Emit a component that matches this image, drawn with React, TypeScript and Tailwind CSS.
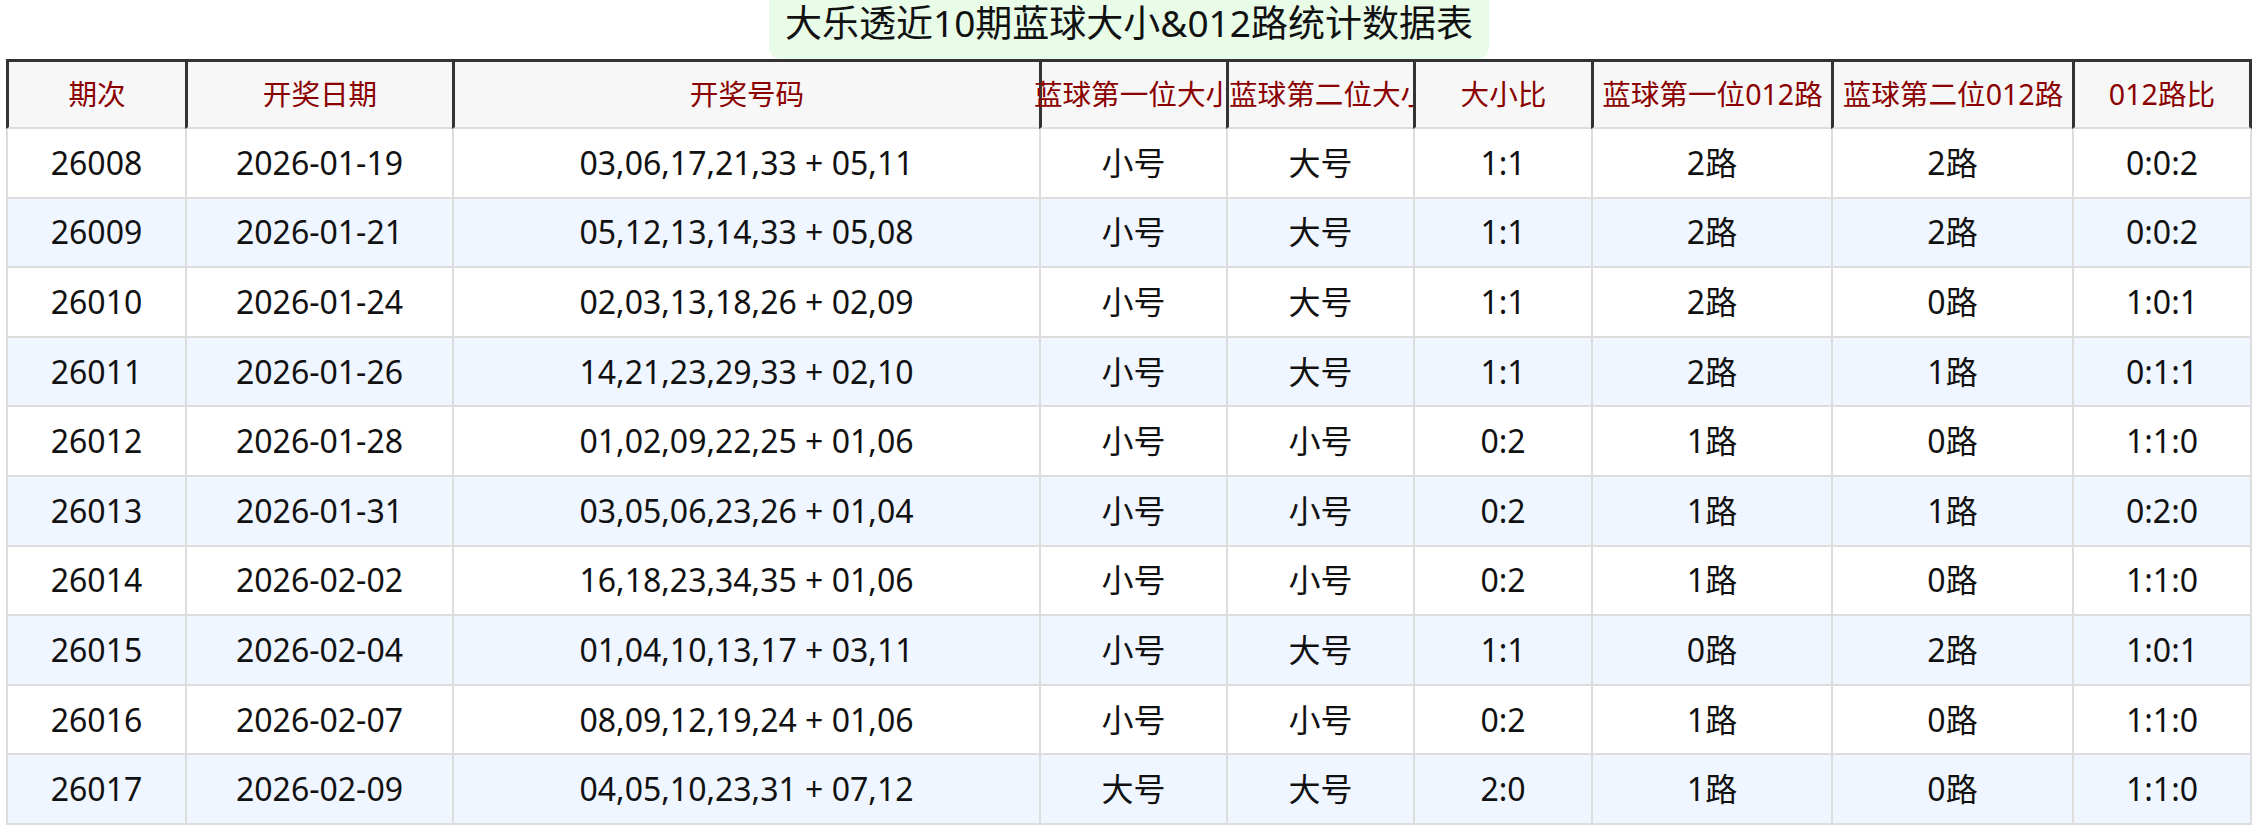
import React from "react";

const rows: string[][] = [
  ["26008", "2026-01-19", "03,06,17,21,33 + 05,11", "小号", "大号", "1:1", "2路", "2路", "0:0:2"],
  ["26009", "2026-01-21", "05,12,13,14,33 + 05,08", "小号", "大号", "1:1", "2路", "2路", "0:0:2"],
  ["26010", "2026-01-24", "02,03,13,18,26 + 02,09", "小号", "大号", "1:1", "2路", "0路", "1:0:1"],
  ["26011", "2026-01-26", "14,21,23,29,33 + 02,10", "小号", "大号", "1:1", "2路", "1路", "0:1:1"],
  ["26012", "2026-01-28", "01,02,09,22,25 + 01,06", "小号", "小号", "0:2", "1路", "0路", "1:1:0"],
  ["26013", "2026-01-31", "03,05,06,23,26 + 01,04", "小号", "小号", "0:2", "1路", "1路", "0:2:0"],
  ["26014", "2026-02-02", "16,18,23,34,35 + 01,06", "小号", "小号", "0:2", "1路", "0路", "1:1:0"],
  ["26015", "2026-02-04", "01,04,10,13,17 + 03,11", "小号", "大号", "1:1", "0路", "2路", "1:0:1"],
  ["26016", "2026-02-07", "08,09,12,19,24 + 01,06", "小号", "小号", "0:2", "1路", "0路", "1:1:0"],
  ["26017", "2026-02-09", "04,05,10,23,31 + 07,12", "大号", "大号", "2:0", "1路", "0路", "1:1:0"],
];

const headers = [
  "期次",
  "开奖日期",
  "开奖号码",
  "蓝球第一位大小",
  "蓝球第二位大小",
  "大小比",
  "蓝球第一位012路",
  "蓝球第二位012路",
  "012路比",
];

const colClasses = [
  "w-[179px]",
  "w-[267px]",
  "w-[587px]",
  "w-[187px]",
  "w-[187px]",
  "w-[178px]",
  "w-[240px]",
  "w-[241px]",
  "w-[180px]",
];

const thBase =
  "h-[70px] p-0 bg-[#f7f7f7] border-t-[3px] border-l-[3px] border-b-2 border-t-[#333] border-l-[#333] border-b-[#ddd] text-[#8b0000] text-[28.6px] font-normal whitespace-nowrap align-middle";

export default function App() {
  return (
    <div className="w-[2258px] h-[832px] overflow-hidden bg-white font-['Noto_Sans','Noto_Sans_CJK_SC',sans-serif] text-[#111]">
      <div className="flex justify-center">
        <div className="h-[59px] px-4 rounded-b-[12px] bg-[#e8fce8] text-[37px] leading-[46px] whitespace-nowrap">
          大乐透近10期蓝球大小&amp;012路统计数据表
        </div>
      </div>
      <div className="px-[6px]">
        <table className="table-fixed border-separate border-spacing-0 w-[2246px]">
          <colgroup>
            {colClasses.map((c, i) => (
              <col key={i} className={c} />
            ))}
          </colgroup>
          <thead>
            <tr>
              {headers.map((h, i) => {
                const last = i === headers.length - 1;
                return (
                  <th
                    key={i}
                    className={
                      thBase + (last ? " border-r-[3px] border-r-[#333]" : "")
                    }
                  >
                    {i === 3 ? (
                      <div className="-ml-[10px] pl-[10px] overflow-hidden">
                        <div className="flex justify-center">
                          <span className="shrink-0">{h}</span>
                        </div>
                      </div>
                    ) : i === 4 ? (
                      <div className="overflow-hidden flex justify-start">
                        <span className="shrink-0">{h}</span>
                      </div>
                    ) : (
                      <div className="flex justify-center">
                        <span className="shrink-0">{h}</span>
                      </div>
                    )}
                  </th>
                );
              })}
            </tr>
          </thead>
          <tbody>
            {rows.map((r, ri) => (
              <tr key={ri} className={ri % 2 === 1 ? "bg-[#eff6ff]" : "bg-white"}>
                {r.map((cell, ci) => {
                  const last = ci === r.length - 1;
                  return (
                    <td
                      key={ci}
                      className={
                        "h-[69.6px] p-0 text-center align-middle text-[32px] whitespace-nowrap border-b-2 border-l-2 border-[#ddd]" +
                        (last ? " border-r-2" : "")
                      }
                    >
                      {cell}
                    </td>
                  );
                })}
              </tr>
            ))}
          </tbody>
        </table>
      </div>
    </div>
  );
}
